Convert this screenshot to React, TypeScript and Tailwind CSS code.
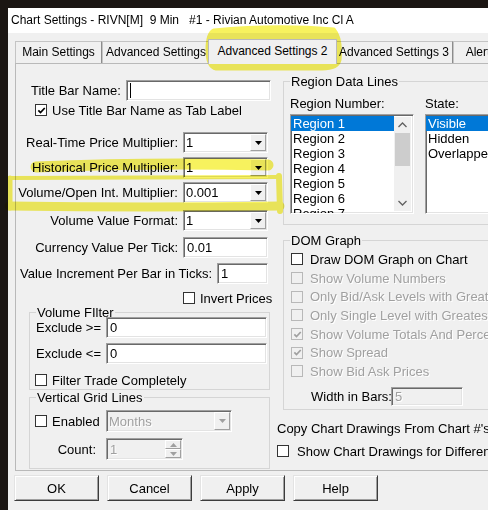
import React from "react";

const sunken =
  "border border-t-[#a0a0a0] border-l-[#a0a0a0] border-b-white border-r-white shadow-[inset_1px_1px_0_#696969,inset_-1px_-1px_0_#e3e3e3]";
const grayText = "text-[#a0a0a0] [text-shadow:1px_1px_0_#fff]";

const Check: React.FC<{ checked?: boolean; disabled?: boolean }> = ({
  checked,
  disabled,
}) => (
  <span
    className={`w-[12px] h-[12px] shrink-0 border flex items-center justify-center ${
      disabled ? "border-[#b8b8b8] bg-[#f0f0f0]" : "border-[#333] bg-white"
    }`}
  >
    {checked && (
      <svg viewBox="0 0 10 10" className="w-[9px] h-[9px]">
        <path
          d="M1.5 4.8 L3.9 7.3 L8.6 2.2"
          fill="none"
          stroke={disabled ? "#a0a0a0" : "#000"}
          strokeWidth="1.9"
        />
      </svg>
    )}
  </span>
);

const Arrow: React.FC<{ up?: boolean; color?: string }> = ({ up, color = "#000" }) => (
  <svg width="7" height="4" viewBox="0 0 7 4">
    <path d={up ? "M0 4H7L3.5 0Z" : "M0 0H7L3.5 4Z"} fill={color} />
  </svg>
);

const Combo: React.FC<{ value: string; w: string; disabled?: boolean; h?: string }> = ({
  value,
  w,
  disabled,
  h = "h-[21px]",
}) => (
  <div
    className={`${w} ${h} ${sunken} flex items-stretch ${
      disabled ? "bg-[#f0f0f0]" : "bg-white"
    }`}
  >
    <span className={`flex-1 pl-[2px] flex items-center ${disabled ? grayText : ""}`}>
      {value}
    </span>
    <span className="w-[16px] my-[1px] mr-[1px] bg-[#f0f0f0] border border-t-white border-l-white border-b-[#a0a0a0] border-r-[#a0a0a0] flex items-center justify-center">
      <Arrow color={disabled ? "#a0a0a0" : "#000"} />
    </span>
  </div>
);

const TextBox: React.FC<{ value: string; w: string; disabled?: boolean; h?: string }> = ({
  value,
  w,
  disabled,
  h = "h-[21px]",
}) => (
  <div
    className={`${w} ${h} ${sunken} pl-[3px] flex items-center ${
      disabled ? `bg-[#f0f0f0] ${grayText}` : "bg-white"
    }`}
  >
    {value}
  </div>
);

const Legend: React.FC<{ text: string }> = ({ text }) => (
  <div className="-mt-[8px] -mb-[7px] ml-[6px] h-[15px] w-fit px-[1px] bg-[#f0f0f0] whitespace-nowrap">
    {text}
  </div>
);

const Row: React.FC<{ label: string; mt: string; children: React.ReactNode }> = ({
  label,
  mt,
  children,
}) => (
  <div className={`${mt} h-[21px] flex items-center justify-end pr-[9px]`}>
    <span className="mr-[5px] whitespace-nowrap">{label}</span>
    {children}
  </div>
);

const DomRow: React.FC<{ text: string; checked?: boolean; disabled?: boolean }> = ({
  text,
  checked,
  disabled,
}) => (
  <div className="h-[18.7px] pl-[7px] flex items-center whitespace-nowrap">
    <Check checked={checked} disabled={disabled} />
    <span className={`ml-[7px] ${disabled ? grayText : ""}`}>{text}</span>
  </div>
);

const ListBox: React.FC<{ items: string[]; w: string; scroll?: boolean }> = ({
  items,
  w,
  scroll,
}) => (
  <div className={`${w} h-[100px] ${sunken} bg-white flex overflow-hidden`}>
    <div className="flex-1 pt-[1px] overflow-hidden">
      {items.map((item, i) => (
        <div
          key={item}
          className={`h-[15px] pl-[2px] whitespace-nowrap ${
            i === 0 ? "bg-[#0078d7] text-white" : ""
          }`}
        >
          {item}
        </div>
      ))}
    </div>
    {scroll && (
      <div className="w-[17px] my-[2px] mr-[2px] bg-[#f0f0f0] flex flex-col">
        <div className="h-[16px] flex items-center justify-center">
          <svg width="9" height="6" viewBox="0 0 9 6">
            <path d="M0.5 5L4.5 1L8.5 5" fill="none" stroke="#606060" strokeWidth="1.3" />
          </svg>
        </div>
        <div className="h-[33px] mx-[1px] bg-[#cdcdcd]" />
        <div className="flex-1" />
        <div className="h-[16px] flex items-center justify-center">
          <svg width="9" height="6" viewBox="0 0 9 6">
            <path d="M0.5 1L4.5 5L8.5 1" fill="none" stroke="#606060" strokeWidth="1.3" />
          </svg>
        </div>
      </div>
    )}
  </div>
);

const Button: React.FC<{ label: string }> = ({ label }) => (
  <div className="w-[85px] h-[26px] bg-[#f0f0f0] border border-t-[#e3e3e3] border-l-[#e3e3e3] border-b-[#3c3c3c] border-r-[#3c3c3c] shadow-[inset_1px_1px_0_#fff,inset_-1px_-1px_0_#a0a0a0] flex items-center justify-center">
    {label}
  </div>
);

const tabs = [
  { label: "Main Settings", w: "w-[87px]" },
  { label: "Advanced Settings", w: "w-[108px]" },
  { label: "Advanced Settings 2", w: "w-[129px]", active: true },
  { label: "Advanced Settings 3", w: "w-[118px]" },
  { label: "Alerts", w: "w-[56px]" },
];

export default function App() {
  return (
    <div className="w-[488px] h-[510px] overflow-hidden bg-[#1b1613] relative pt-[8px] pl-[8px] font-['Liberation_Sans',Arial,sans-serif] text-[13px] leading-[15px] text-black">
      <div className="w-[600px] h-[502px] flex flex-col">
        <div className="h-[25px] bg-white flex items-center pl-[3px] text-[12px] whitespace-pre">
          Chart Settings - RIVN[M]  9 Min   #1 - Rivian Automotive Inc Cl A
        </div>
        <div className="flex-1 bg-[#f0f0f0] pl-[7px] pt-[5px]">
          {/* tab strip */}
          <div className="h-[25px] flex items-end text-[12px]">
            {tabs.map((t) =>
              t.active ? (
                <div
                  key={t.label}
                  className={`${t.w} -mx-[2px] h-[25px] -mb-[1px] z-10 bg-[#f0f0f0] border border-b-0 border-[#b9b9b9] flex items-center justify-center pb-[2px] whitespace-nowrap`}
                >
                  {t.label}
                </div>
              ) : (
                <div
                  key={t.label}
                  className={`${t.w} shrink-0 h-[22px] border border-b-0 border-[#c4c4c4] border-r-[#8c8c8c] flex items-center justify-center whitespace-nowrap`}
                >
                  {t.label}
                </div>
              )
            )}
          </div>

          {/* tab panel */}
          <div className="h-[408px] border border-[#b9b9b9] flex">
            {/* left column */}
            <div className="w-[261px] shrink-0">
              <div className="mt-[16px] h-[21px] pl-[15px] flex items-center">
                <span className="w-[95px]">Title Bar Name:</span>
                <div className={`w-[145px] h-[21px] ${sunken} bg-white flex items-center pl-[3px]`}>
                  <span className="w-px h-[15px] bg-black" />
                </div>
              </div>
              <div className="mt-[3px] h-[12px] pl-[19px] flex items-center">
                <Check checked />
                <span className="ml-[5px]">Use Title Bar Name as Tab Label</span>
              </div>

              <Row label="Real-Time Price Multiplier:" mt="mt-[16px]">
                <Combo value="1" w="w-[85px]" />
              </Row>
              <Row label="Historical Price Multiplier:" mt="mt-[4px]">
                <Combo value="1" w="w-[85px]" />
              </Row>
              <Row label="Volume/Open Int. Multiplier:" mt="mt-[4px]">
                <Combo value="0.001" w="w-[85px]" />
              </Row>
              <Row label="Volume Value Format:" mt="mt-[7px]">
                <Combo value="1" w="w-[85px]" />
              </Row>
              <Row label="Currency Value Per Tick:" mt="mt-[6px]">
                <TextBox value="0.01" w="w-[85px]" />
              </Row>
              <Row label="Value Increment Per Bar in Ticks:" mt="mt-[5px]">
                <TextBox value="1" w="w-[51px]" />
              </Row>
              <div className="mt-[8px] h-[12px] pl-[167px] flex items-center">
                <Check />
                <span className="ml-[5px]">Invert Prices</span>
              </div>

              {/* Volume Filter */}
              <div className="mt-[8px] ml-[13px] w-[241px] h-[78px] border border-[#d5d5d5]">
                <Legend text="Volume FIlter" />
                <div className="mt-[4px] h-[21px] pl-[6px] flex items-center">
                  <span className="w-[70px]">Exclude &gt;=</span>
                  <TextBox value="0" w="w-[161px]" />
                </div>
                <div className="mt-[5px] h-[21px] pl-[6px] flex items-center">
                  <span className="w-[70px]">Exclude &lt;=</span>
                  <TextBox value="0" w="w-[161px]" />
                </div>
                <div className="mt-[10px] h-[12px] pl-[5px] flex items-center">
                  <Check />
                  <span className="ml-[5px]">Filter Trade Completely</span>
                </div>
              </div>

              {/* Vertical Grid Lines */}
              <div className="mt-[7px] ml-[13px] w-[241px] h-[72px] border border-[#d5d5d5]">
                <Legend text="Vertical Grid Lines" />
                <div className="mt-[12px] h-[22px] pl-[5px] flex items-center">
                  <Check />
                  <span className="ml-[5px] w-[54px]">Enabled</span>
                  <Combo value="Months" w="w-[126px]" h="h-[22px]" disabled />
                </div>
                <div className="mt-[6px] h-[22px] flex items-center">
                  <span className="w-[66px] text-right">Count:</span>
                  <div className={`ml-[10px] w-[77px] h-[22px] ${sunken} bg-[#f0f0f0] flex`}>
                    <span className={`flex-1 pl-[3px] flex items-center ${grayText}`}>1</span>
                    <div className="w-[16px] my-[1px] mr-[1px] flex flex-col">
                      <span className="flex-1 border border-t-white border-l-white border-b-[#a0a0a0] border-r-[#a0a0a0] flex items-center justify-center">
                        <Arrow up color="#a0a0a0" />
                      </span>
                      <span className="flex-1 border border-t-white border-l-white border-b-[#a0a0a0] border-r-[#a0a0a0] flex items-center justify-center">
                        <Arrow color="#a0a0a0" />
                      </span>
                    </div>
                  </div>
                </div>
              </div>
            </div>

            {/* right column */}
            <div className="flex-1">
              <div className="mt-[17px] ml-[6px] w-[300px] h-[144px] border border-[#d5d5d5]">
                <Legend text="Region Data Lines" />
                <div className="mt-[14px] h-[15px] flex">
                  <span className="ml-[6px] w-[135px]">Region Number:</span>
                  <span>State:</span>
                </div>
                <div className="mt-[3px] flex">
                  <div className="ml-[6px]">
                    <ListBox
                      w="w-[124px]"
                      scroll
                      items={[
                        "Region 1",
                        "Region 2",
                        "Region 3",
                        "Region 4",
                        "Region 5",
                        "Region 6",
                        "Region 7",
                      ]}
                    />
                  </div>
                  <div className="ml-[11px]">
                    <ListBox w="w-[120px]" items={["Visible", "Hidden", "Overlapped"]} />
                  </div>
                </div>
              </div>

              <div className="mt-[15px] ml-[6px] w-[300px] h-[170px] border border-[#d5d5d5]">
                <Legend text="DOM Graph" />
                <div className="mt-[9px]">
                  <DomRow text="Draw DOM Graph on Chart" />
                  <DomRow text="Show Volume Numbers" disabled />
                  <DomRow text="Only Bid/Ask Levels with Greatest Volume" disabled />
                  <DomRow text="Only Single Level with Greatest Volume" disabled />
                  <DomRow text="Show Volume Totals And Percentages" checked disabled />
                  <DomRow text="Show Spread" checked disabled />
                  <DomRow text="Show Bid  Ask Prices" disabled />
                </div>
                <div className="mt-[6px] h-[19px] pl-[27px] flex items-center">
                  <span className="w-[80px] shrink-0 whitespace-nowrap">Width in Bars:</span>
                  <TextBox value="5" w="w-[72px]" h="h-[19px]" disabled />
                </div>
              </div>

              <div className="mt-[11px] h-[15px] whitespace-nowrap">
                Copy Chart Drawings From Chart #'s:
              </div>
              <div className="mt-[9px] h-[12px] flex items-center whitespace-nowrap">
                <Check />
                <span className="ml-[8px]">Show Chart Drawings for Different Symbols</span>
              </div>
            </div>
          </div>

          {/* buttons */}
          <div className="mt-[4px] -ml-[1px] flex gap-[8px]">
            <Button label="OK" />
            <Button label="Cancel" />
            <Button label="Apply" />
            <Button label="Help" />
          </div>
        </div>
      </div>

      {/* highlighter marks */}
      <svg
        className="absolute left-0 top-0 pointer-events-none mix-blend-multiply"
        width="488"
        height="510"
        viewBox="0 0 488 510"
      >
        <g fill="none" stroke="#f7f25e" strokeLinecap="round" strokeLinejoin="round">
          <path
            d="M214 30 Q276 24 334 29 Q342 38 340 60 Q338 69 322 69 L216 69 Q207 67 207 50 Q207 33 214 30 Z"
            fill="#f7f25e"
            strokeWidth="3"
          />
          <path d="M36 167 Q150 162 268 165" strokeWidth="11" />
          <path d="M10 178 L279 177" strokeWidth="4" />
          <path d="M10 178 L10 208" strokeWidth="5" />
          <path d="M279 176 L280 211" strokeWidth="6" />
          <path d="M9 206 Q150 208 280 206" strokeWidth="9" />
        </g>
      </svg>
    </div>
  );
}
